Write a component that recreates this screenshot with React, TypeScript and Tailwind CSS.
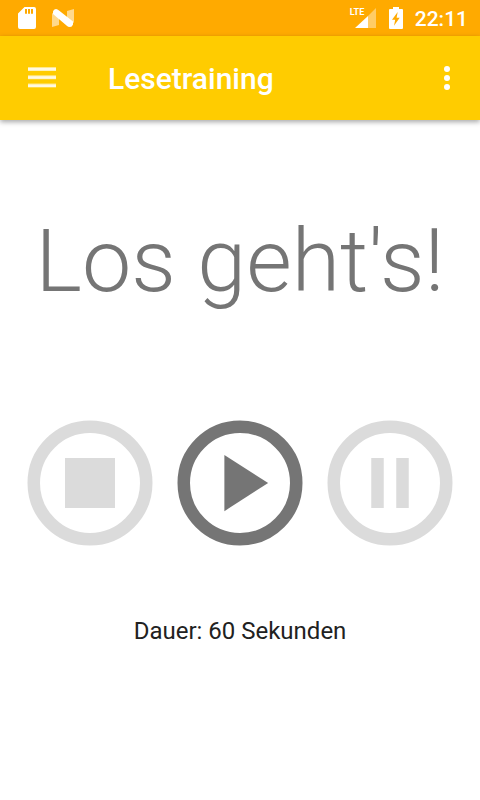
import type { ReactNode } from "react";

function StatusBar() {
  return (
    <div className="flex h-9 items-center bg-[#ffaa00] pr-3 pl-[18px] text-white">
      <svg className="h-[22px] w-[18px]" viewBox="0 0 18 22" fill="currentColor" aria-hidden="true">
        <path
          fillRule="evenodd"
          d="M6.500 0H16a2 2 0 0 1 2 2V20a2 2 0 0 1-2 2H2a2 2 0 0 1-2-2V6.500ZM7 2V6.700H9V2ZM10 2V6.700H12V2ZM13 2V6.700H15V2Z"
        />
      </svg>
      <svg className="ml-4 h-[18px] w-[22px]" viewBox="0 0 22 18" fill="currentColor" aria-hidden="true">
        <path opacity=".55" d="M0 4 7 8V16L0 18ZM15 2 22 0V14L15 9Z" />
        <path d="M1 2.500Q1.500 0 4 0 5.500 0 7 1.500L21 12.500V15.500Q20 18 18 18 16 18 14.500 16.500L1 5Z" />
      </svg>
      <div className="relative ml-auto h-[22px] w-[26px]">
        <span className="absolute top-0 left-0 text-[9px] leading-[10px] font-bold">LTE</span>
        <svg className="h-[22px] w-[26px]" viewBox="0 0 26 22" fill="currentColor" aria-hidden="true">
          <path opacity=".4" d="M26 1V21H18V9Z" />
          <path d="M18 9V21H5Z" />
        </svg>
      </div>
      <svg className="ml-[13px] h-[22px] w-[14px]" viewBox="0 0 14 22" fill="currentColor" aria-hidden="true">
        <path
          fillRule="evenodd"
          d="M4 0H10V2H13a1 1 0 0 1 1 1V21a1 1 0 0 1-1 1H1a1 1 0 0 1-1-1V3a1 1 0 0 1 1-1H4ZM8.700 5 3 12.800H6.200L5 18.800 10.700 10.800H7.600Z"
        />
      </svg>
      <time className="ml-3 pt-0.5 text-[21px] leading-6 font-medium">22:11</time>
    </div>
  );
}

function Toolbar() {
  return (
    <header className="flex h-21 items-center bg-[#ffcc00] pr-[21px] pl-7 text-white shadow-[0_2px_5px_rgba(0,0,0,0.35)]">
      <button type="button" aria-label="Menü">
        <svg className="h-7 w-7" viewBox="0 0 28 28" fill="currentColor" aria-hidden="true">
          <path opacity=".55" d="M0 3H28V7H0ZM0 11.300H28V15.300H0ZM0 19.500H28V23.500H0Z" />
          <path opacity=".75" d="M0 4H28V6.500H0ZM0 12.200H28V14.700H0ZM0 20.400H28V22.900H0Z" />
        </svg>
      </button>
      <h1 className="ml-13 pt-0.5 text-[30px] leading-9 font-medium">Lesetraining</h1>
      <button type="button" aria-label="Weitere Optionen" className="ml-auto">
        <svg className="h-6 w-6" viewBox="0 0 24 24" fill="currentColor" aria-hidden="true">
          <circle cx="12" cy="3" r="3" />
          <circle cx="12" cy="12" r="3" />
          <circle cx="12" cy="21" r="3" />
        </svg>
      </button>
    </header>
  );
}

function RoundButton({ label, disabled, children }: { label: string; disabled?: boolean; children: ReactNode }) {
  return (
    <button type="button" aria-label={label} disabled={disabled} className="text-[#757575] disabled:text-[#dbdbdb]">
      <svg className="h-[150px] w-[150px]" viewBox="0 0 24 24" fill="currentColor" aria-hidden="true">
        <circle cx="12" cy="12" r="9" fill="none" stroke="currentColor" strokeWidth="2" />
        {children}
      </svg>
    </button>
  );
}

export default function App() {
  return (
    <div className="min-h-screen bg-white font-[Roboto,sans-serif]">
      <StatusBar />
      <Toolbar />
      <main className="flex flex-col items-center pt-22">
        <p className="text-[88px] leading-[106px] font-light whitespace-nowrap text-[#757575]">Los geht's!</p>
        <div className="mt-[94px] flex justify-center">
          <RoundButton label="Stopp" disabled>
            <path d="M8 8H16V16H8Z" />
          </RoundButton>
          <RoundButton label="Start">
            <path d="M9.500 7.500 16.500 12 9.500 16.500Z" />
          </RoundButton>
          <RoundButton label="Pause" disabled>
            <path d="M9 8H11V16H9ZM13 8H15V16H13Z" />
          </RoundButton>
        </div>
        <p className="mt-[59px] text-2xl leading-7 text-[#212121]">Dauer: 60 Sekunden</p>
      </main>
    </div>
  );
}
